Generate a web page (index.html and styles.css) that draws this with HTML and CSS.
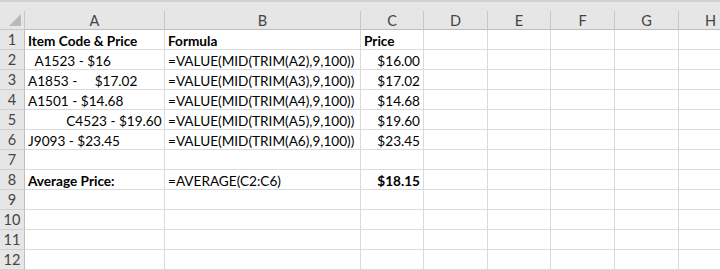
FILE: index.html
```html
<!DOCTYPE html>
<html lang="en">
<head>
    <meta charset="UTF-8">
    <title>Item Prices</title>
    <link rel="stylesheet" href="styles.css">
</head>
<body>
    <div class="topbar"></div>

    <div class="sheet">
        <!-- column headers -->
        <div class="corner"><span class="tri"></span></div>
        <div class="colhead">A</div>
        <div class="colhead">B</div>
        <div class="colhead">C</div>
        <div class="colhead">D</div>
        <div class="colhead">E</div>
        <div class="colhead">F</div>
        <div class="colhead">G</div>
        <div class="colhead">H</div>

        <!-- row 1 -->
        <div class="rowhead">1</div>
        <div class="cell bold">Item Code &amp; Price</div>
        <div class="cell bold">Formula</div>
        <div class="cell bold">Price</div>
        <div class="cell"></div><div class="cell"></div><div class="cell"></div><div class="cell"></div><div class="cell"></div>

        <!-- row 2 -->
        <div class="rowhead">2</div>
        <div class="cell">  A1523 - $16</div>
        <div class="cell">=VALUE(MID(TRIM(A2),9,100))</div>
        <div class="cell num">$16.00</div>
        <div class="cell"></div><div class="cell"></div><div class="cell"></div><div class="cell"></div><div class="cell"></div>

        <!-- row 3 -->
        <div class="rowhead">3</div>
        <div class="cell">A1853 -     $17.02</div>
        <div class="cell">=VALUE(MID(TRIM(A3),9,100))</div>
        <div class="cell num">$17.02</div>
        <div class="cell"></div><div class="cell"></div><div class="cell"></div><div class="cell"></div><div class="cell"></div>

        <!-- row 4 -->
        <div class="rowhead">4</div>
        <div class="cell">A1501 - $14.68</div>
        <div class="cell">=VALUE(MID(TRIM(A4),9,100))</div>
        <div class="cell num">$14.68</div>
        <div class="cell"></div><div class="cell"></div><div class="cell"></div><div class="cell"></div><div class="cell"></div>

        <!-- row 5 -->
        <div class="rowhead">5</div>
        <div class="cell">           C4523 - $19.60</div>
        <div class="cell">=VALUE(MID(TRIM(A5),9,100))</div>
        <div class="cell num">$19.60</div>
        <div class="cell"></div><div class="cell"></div><div class="cell"></div><div class="cell"></div><div class="cell"></div>

        <!-- row 6 -->
        <div class="rowhead">6</div>
        <div class="cell">J9093 - $23.45</div>
        <div class="cell">=VALUE(MID(TRIM(A6),9,100))</div>
        <div class="cell num">$23.45</div>
        <div class="cell"></div><div class="cell"></div><div class="cell"></div><div class="cell"></div><div class="cell"></div>

        <!-- row 7 -->
        <div class="rowhead">7</div>
        <div class="cell"></div><div class="cell"></div><div class="cell"></div><div class="cell"></div>
        <div class="cell"></div><div class="cell"></div><div class="cell"></div><div class="cell"></div>

        <!-- row 8 -->
        <div class="rowhead">8</div>
        <div class="cell bold">Average Price:</div>
        <div class="cell">=AVERAGE(C2:C6)</div>
        <div class="cell num bold">$18.15</div>
        <div class="cell"></div><div class="cell"></div><div class="cell"></div><div class="cell"></div><div class="cell"></div>

        <!-- rows 9-12 -->
        <div class="rowhead">9</div>
        <div class="cell"></div><div class="cell"></div><div class="cell"></div><div class="cell"></div>
        <div class="cell"></div><div class="cell"></div><div class="cell"></div><div class="cell"></div>

        <div class="rowhead">10</div>
        <div class="cell"></div><div class="cell"></div><div class="cell"></div><div class="cell"></div>
        <div class="cell"></div><div class="cell"></div><div class="cell"></div><div class="cell"></div>

        <div class="rowhead">11</div>
        <div class="cell"></div><div class="cell"></div><div class="cell"></div><div class="cell"></div>
        <div class="cell"></div><div class="cell"></div><div class="cell"></div><div class="cell"></div>

        <div class="rowhead">12</div>
        <div class="cell"></div><div class="cell"></div><div class="cell"></div><div class="cell"></div>
        <div class="cell"></div><div class="cell"></div><div class="cell"></div><div class="cell"></div>
    </div>
</body>
</html>
```

FILE: styles.css
```css
html, body {
    margin: 0;
    padding: 0;
    background: #fff;
    overflow: hidden;
}

body {
    width: 720px;
    height: 270px;
    font-family: 'Lato', 'Liberation Sans', sans-serif;
    font-size: 13.6px;
    color: #000;
}

.topbar {
    height: 11px;
    box-sizing: border-box;
    background: #e6e6e6;
    border-top: 2px solid #d2d2d2;
}

.sheet {
    display: grid;
    grid-template-columns: 25px 140px 196px 63px 64px 63px 64px 64px 64px;
    grid-template-rows: 19px repeat(12, 20px);
    width: 743px;
}

.sheet > div {
    box-sizing: border-box;
    overflow: hidden;
    white-space: pre;
}

.corner {
    position: relative;
    background: #e6e6e6;
    border-right: 1px solid #c8c8c8;
    border-bottom: 1px solid #c8c8c8;
}

.tri {
    position: absolute;
    right: 3px;
    bottom: 3px;
    width: 0;
    height: 0;
    border-left: 12px solid transparent;
    border-bottom: 12px solid #b9b9b9;
}

.colhead {
    background: #e6e6e6;
    color: #444;
    font-size: 14.5px;
    text-align: center;
    line-height: 19px;
    border-right: 1px solid #c8c8c8;
    border-bottom: 1px solid #bdbdbd;
}

.rowhead {
    background: #e6e6e6;
    color: #444;
    font-size: 14.5px;
    text-align: center;
    line-height: 20px;
    border-right: 1px solid #bdbdbd;
    border-bottom: 1px solid #d0d0d0;
}

.cell {
    padding: 1px 3px 0;
    line-height: 20px;
    border-right: 1px solid #dadada;
    border-bottom: 1px solid #dadada;
}

.bold {
    font-weight: bold;
}

.num {
    text-align: right;
}
```
